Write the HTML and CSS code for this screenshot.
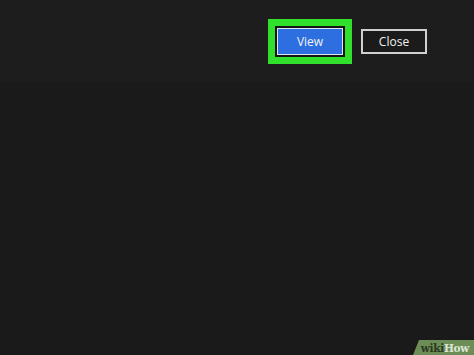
FILE: index.html
```html
<!DOCTYPE html>
<html>
<head>
<meta charset="utf-8">
<link rel="stylesheet" href="styles.css">
</head>
<body>
<div class="screen">
  <div class="topbar">
    <div class="highlight">
      <div class="inner">
        <button class="btn btn-primary">View</button>
      </div>
    </div>
    <button class="btn btn-secondary">Close</button>
  </div>
  <div class="content"></div>
  <div class="watermark"><span class="wiki">wiki</span><span class="how">How</span></div>
</div>
</body>
</html>
```
FILE: styles.css
```css
html, body {
  margin: 0;
  padding: 0;
  background: #1a1a1a;
}
.screen {
  position: relative;
  width: 474px;
  height: 355px;
  overflow: hidden;
  background: #1a1a1a;
  font-family: "Open Sans", "Noto Sans", sans-serif;
}
.topbar {
  height: 82px;
  background: #1d1d1d;
  display: flex;
  justify-content: flex-end;
  align-items: flex-start;
  padding: 19px 47px 0 0;
  box-sizing: border-box;
  gap: 9px;
}
.highlight {
  background: #31e02c;
  padding: 7px;
}
.inner {
  background: #141414;
  padding: 2px;
  display: flex;
}
.btn {
  width: 66px;
  height: 27px;
  box-sizing: border-box;
  font-family: "Open Sans", "Noto Sans", sans-serif;
  font-size: 12px;
  color: #f2f2f2;
  border: 2px solid #d8d8d8;
  margin: 0;
  padding: 0;
  display: flex;
  align-items: center;
  justify-content: center;
}
.btn-primary {
  background: #2d6ee0;
  border-width: 1.5px;
  border-color: #dfe6f2;
}
.btn-secondary {
  background: #1b1b1b;
  margin-top: 10px;
  height: 25px;
  border-color: #d0d0d0;
}
.watermark {
  position: absolute;
  right: 0;
  bottom: 0;
  width: 61px;
  height: 15px;
  box-sizing: border-box;
  background: #6c8d56;
  clip-path: polygon(6px 0, 100% 0, 100% 100%, 0 100%);
  display: flex;
  align-items: center;
  justify-content: flex-end;
  padding-right: 5px;
  font-family: "DejaVu Serif", "Liberation Serif", serif;
  font-weight: bold;
  font-size: 10.5px;
  letter-spacing: -0.3px;
}
.wiki {
  color: #2a3822;
}
.how {
  color: #dde6d6;
}
```
